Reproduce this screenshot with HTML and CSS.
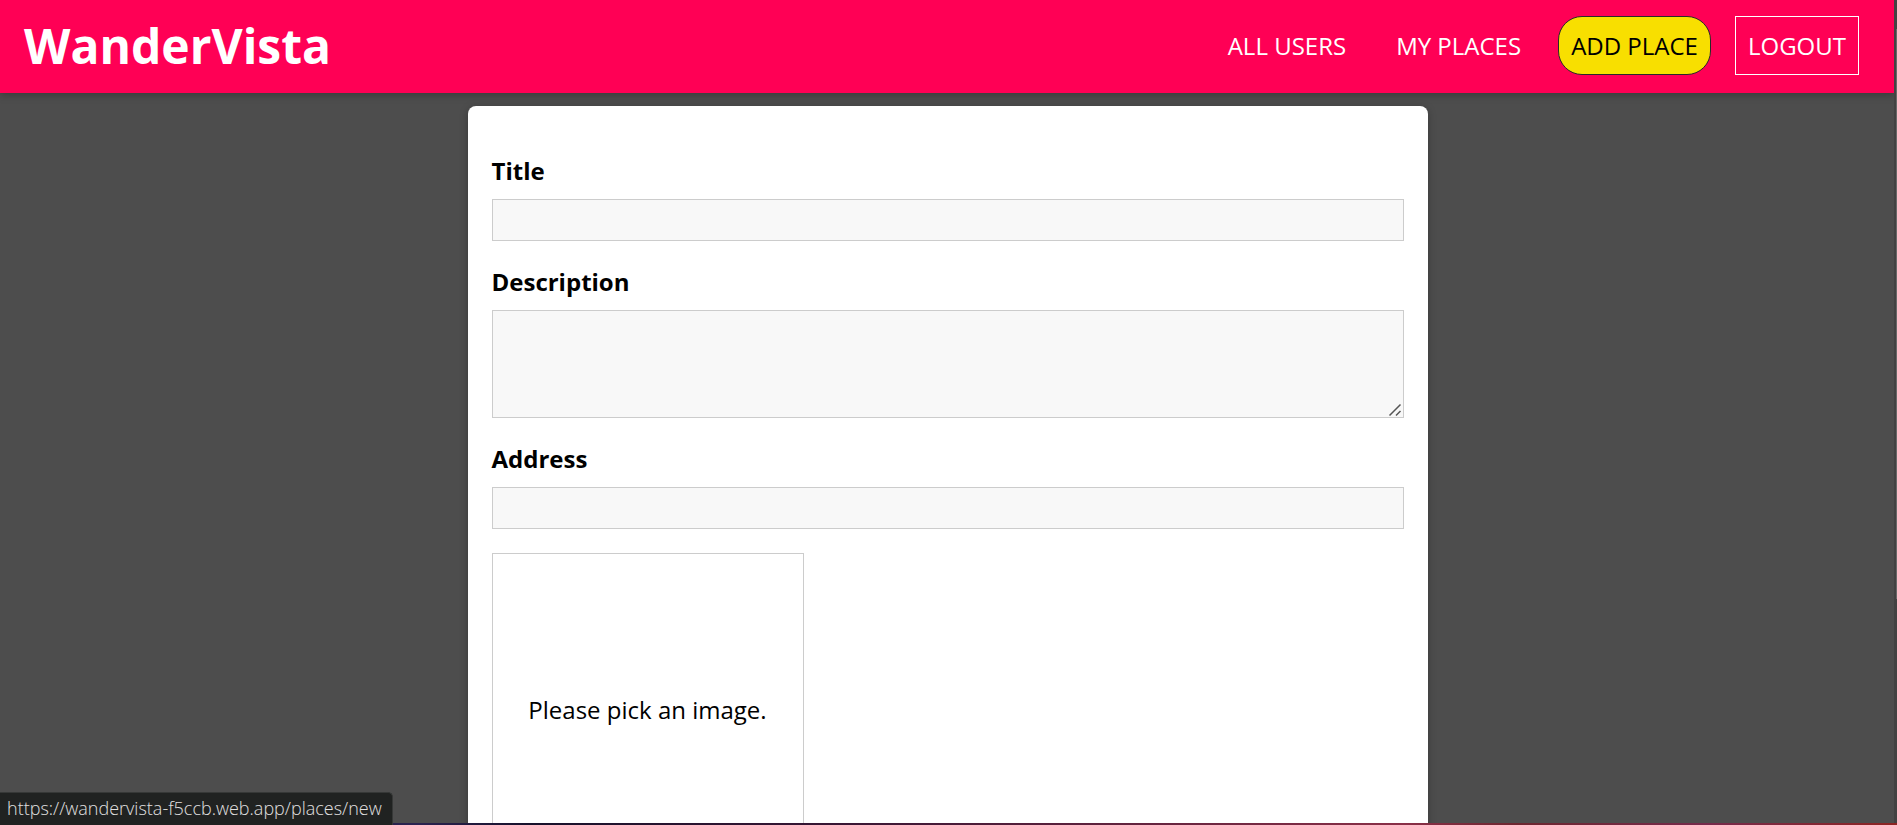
FILE: index.html
```html
<!DOCTYPE html>
<html lang="en">
<head>
<meta charset="utf-8">
<title>WanderVista</title>
<link rel="stylesheet" href="styles.css">
</head>
<body>
<div class="page">
  <header class="header">
    <h1 class="brand"><a href="#">WanderVista</a></h1>
    <nav>
      <ul class="nav-links">
        <li><a class="nav-link" href="#">ALL USERS</a></li>
        <li><a class="nav-link" href="#">MY PLACES</a></li>
        <li><a class="nav-link nav-link-active" href="#">ADD PLACE</a></li>
        <li><button class="nav-link nav-logout" type="button">LOGOUT</button></li>
      </ul>
    </nav>
  </header>
  <main class="content">
    <form class="place-form">
      <div class="form-control">
        <label for="title">Title</label>
        <input id="title" type="text">
      </div>
      <div class="form-control">
        <label for="description">Description</label>
        <div class="textarea-box">
          <textarea id="description" rows="3"></textarea>
          <svg class="resize-grip" width="14" height="14" viewBox="0 0 14 14" aria-hidden="true">
            <path d="M1.5 12.5 12.5 1.5M8 12.5 12.5 8" fill="none" stroke="#555" stroke-width="1.5"/>
          </svg>
        </div>
      </div>
      <div class="form-control">
        <label for="address">Address</label>
        <input id="address" type="text">
      </div>
      <div class="image-preview"><p>Please pick an image.</p></div>
    </form>
  </main>
</div>
<div class="scrollbar"><div class="scrollbar-thumb"></div></div>
<div class="desktop-edge"></div>
<div class="link-status">https://wandervista-f5ccb.web.app/places/new</div>
</body>
</html>
```
FILE: styles.css
```css
* {
  box-sizing: border-box;
}

body {
  margin: 0;
  height: 100vh;
  overflow: hidden;
  background: #4d4d4d;
  color: #000;
  font-family: "Open Sans", "Noto Sans", sans-serif;
  font-size: 24px;
  line-height: 33px;
}

.page {
  display: flex;
  flex-direction: column;
  height: 100vh;
  padding-right: 2px;
  overflow: hidden;
}

.header {
  display: flex;
  flex: none;
  align-items: center;
  justify-content: space-between;
  padding: 13px 24px 15px;
  background: #ff0055;
  box-shadow: 0 2px 8px rgba(0, 0, 0, 0.26);
}

.brand {
  margin: 0;
  font-size: 48px;
  line-height: 65px;
  font-weight: 700;
}

.brand a {
  color: #fff;
  text-decoration: none;
}

.nav-links {
  display: flex;
  margin: 0;
  padding: 0;
  list-style: none;
}

.nav-links li {
  display: flex;
  margin: 0 12px;
}

.nav-link {
  padding: 12px;
  border: 1px solid transparent;
  background: transparent;
  color: #fff;
  font: inherit;
  text-decoration: none;
}

.nav-link-active {
  border-color: #292929;
  border-radius: 24px;
  background: #f8df00;
  color: #000;
}

.nav-logout {
  border-color: #fff;
}

.content {
  flex: 1;
  min-height: 0;
  padding: 13px 24px 0;
  overflow: hidden;
}

.place-form {
  max-width: 960px;
  margin: 0 auto;
  padding: 24px;
  border-radius: 8px;
  background: #fff;
  box-shadow: 0 2px 8px rgba(0, 0, 0, 0.26);
}

.form-control {
  margin: 24px 0;
}

.form-control label {
  display: block;
  margin-bottom: 12px;
  font-weight: 700;
}

.form-control input,
.form-control textarea {
  display: block;
  width: 100%;
  padding: 4px;
  border: 1px solid #ccc;
  border-radius: 0;
  background: #f8f8f8;
  font: inherit;
}

.form-control input {
  height: 42px;
}

.form-control textarea {
  height: 108px;
  resize: vertical;
}

.form-control textarea::-webkit-resizer {
  background: transparent;
}

.textarea-box {
  position: relative;
}

.resize-grip {
  position: absolute;
  right: 2px;
  bottom: 1px;
  pointer-events: none;
}

.image-preview {
  display: flex;
  align-items: center;
  justify-content: center;
  width: 312px;
  height: 312px;
  border: 1px solid #ccc;
}

.image-preview p {
  margin: 0;
}

.scrollbar {
  position: fixed;
  top: 0;
  right: 0;
  bottom: 0;
  width: 3px;
  padding: 29px 0 0 2px;
  background: #424242;
}

.scrollbar-thumb {
  height: 570px;
  background: #686868;
}

.desktop-edge {
  position: fixed;
  right: 0;
  bottom: 0;
  left: 0;
  height: 2px;
  background: linear-gradient(90deg, #171226, #2b2350 22%, #17112b 28%, #3a1735 45%, #8a3048 74%, #6d2730 80%, #762b4c 90%, #8d2523);
}

.link-status {
  position: fixed;
  bottom: 0;
  left: 0;
  padding: 3px 10px 5px 7px;
  border-top: 1px solid #363837;
  border-right: 1px solid #363837;
  border-radius: 0 5px 0 0;
  background: #202221;
  color: #e0e0e0;
  font-size: 18px;
  line-height: 24px;
  font-weight: 300;
}
```
